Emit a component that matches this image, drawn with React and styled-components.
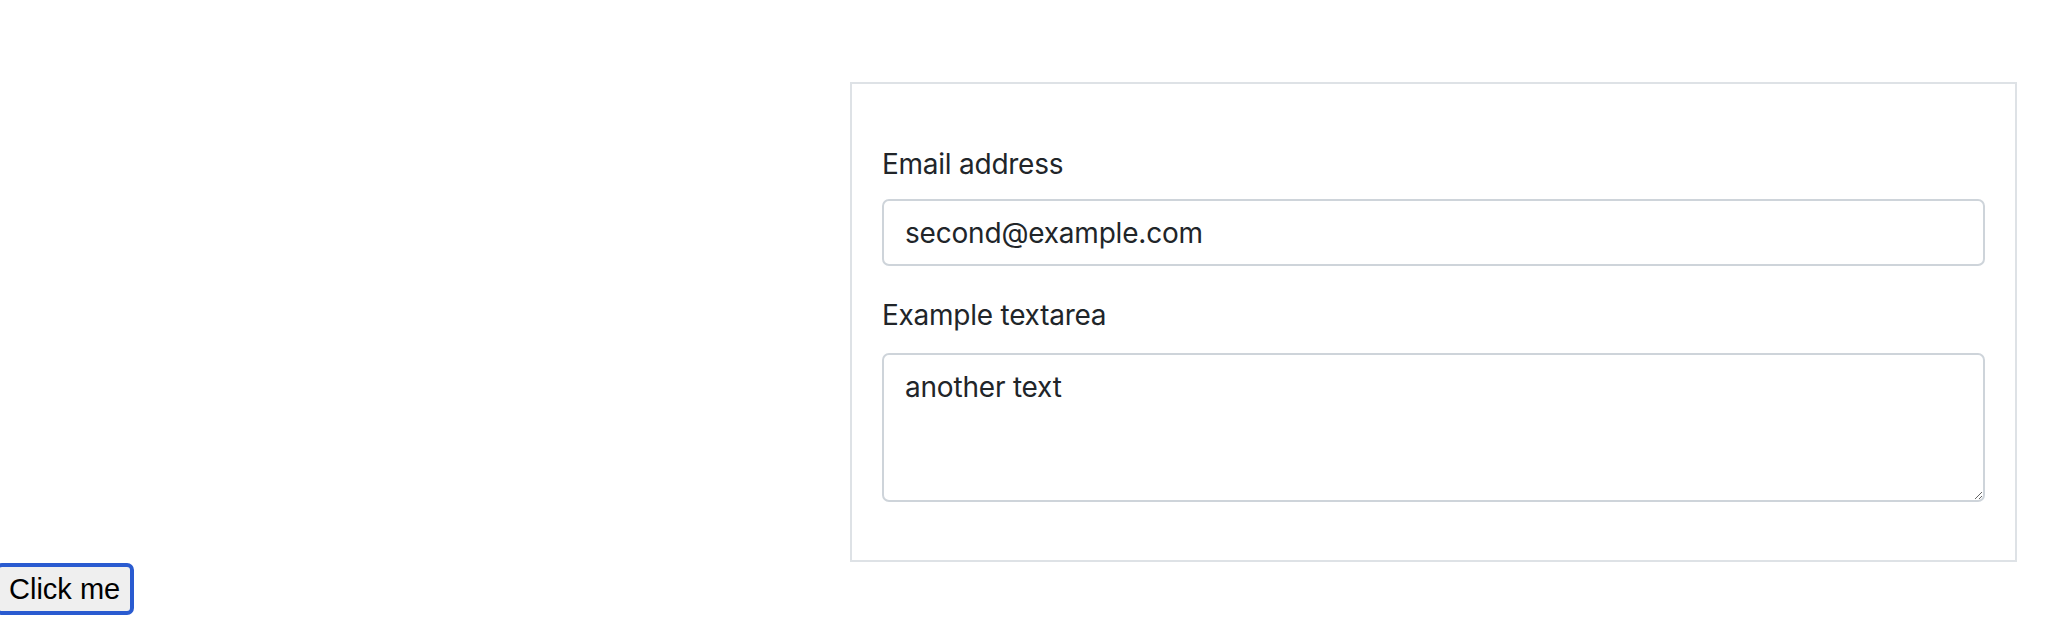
import React from "react";
import styled, { createGlobalStyle } from "styled-components";

const Global = createGlobalStyle`
  html, body { margin: 0; padding: 0; background: #fff; }
  body { font-family: Inter, "Noto Sans", sans-serif; color: #212529; }
`;

const Page = styled.div`
  padding-top: 82px;
`;

const Row = styled.div`
  display: flex;
  justify-content: flex-end;
  padding-right: 33px;
`;

const Panel = styled.form`
  box-sizing: border-box;
  width: 1167px;
  border: 2px solid #dee2e6;
  padding: 59px 30px 30px 30px;
`;

const Group = styled.div`
  margin-bottom: 28px;
`;

const Label = styled.label`
  display: block;
  font-size: 28px;
  line-height: 42px;
  letter-spacing: -0.25px;
  margin-bottom: ${(p) => p.$gap || 14}px;
  color: #212529;
`;

const fieldBase = `
  display: block;
  box-sizing: border-box;
  width: 100%;
  font-family: Inter, "Noto Sans", sans-serif;
  font-size: 28px;
  line-height: 42px;
  letter-spacing: -0.2px;
  color: #212529;
  background: #fff;
  border: 2px solid #ced4da;
  border-radius: 7px;
  padding: 10.5px 21px;
  outline: none;
  margin: 0;
`;

const Input = styled.input`
  ${fieldBase}
  height: 67px;
`;

const TextArea = styled.textarea`
  ${fieldBase}
  height: 149px;
  resize: vertical;
`;

const Button = styled.button`
  display: block;
  margin-left: -5px;
  margin-top: 1px;
  height: 52px;
  box-sizing: border-box;
  padding: 0 10px;
  font-family: "Liberation Sans", Arial, sans-serif;
  font-size: 29px;
  line-height: 32px;
  color: #000;
  background: #efefef;
  border: 4px solid #2a5bd0;
  border-radius: 7px;
  cursor: pointer;
`;

export default function App() {
  return (
    <>
      <Global />
      <Page>
        <Row>
          <Panel onSubmit={(e) => e.preventDefault()}>
            <Group>
              <Label htmlFor="email">Email address</Label>
              <Input id="email" type="email" defaultValue="second@example.com" />
            </Group>
            <Group>
              <Label htmlFor="ta" $gap={17}>Example textarea</Label>
              <TextArea id="ta" rows={3} defaultValue="another text" />
            </Group>
          </Panel>
        </Row>
        <Button type="button">Click me</Button>
      </Page>
    </>
  );
}
